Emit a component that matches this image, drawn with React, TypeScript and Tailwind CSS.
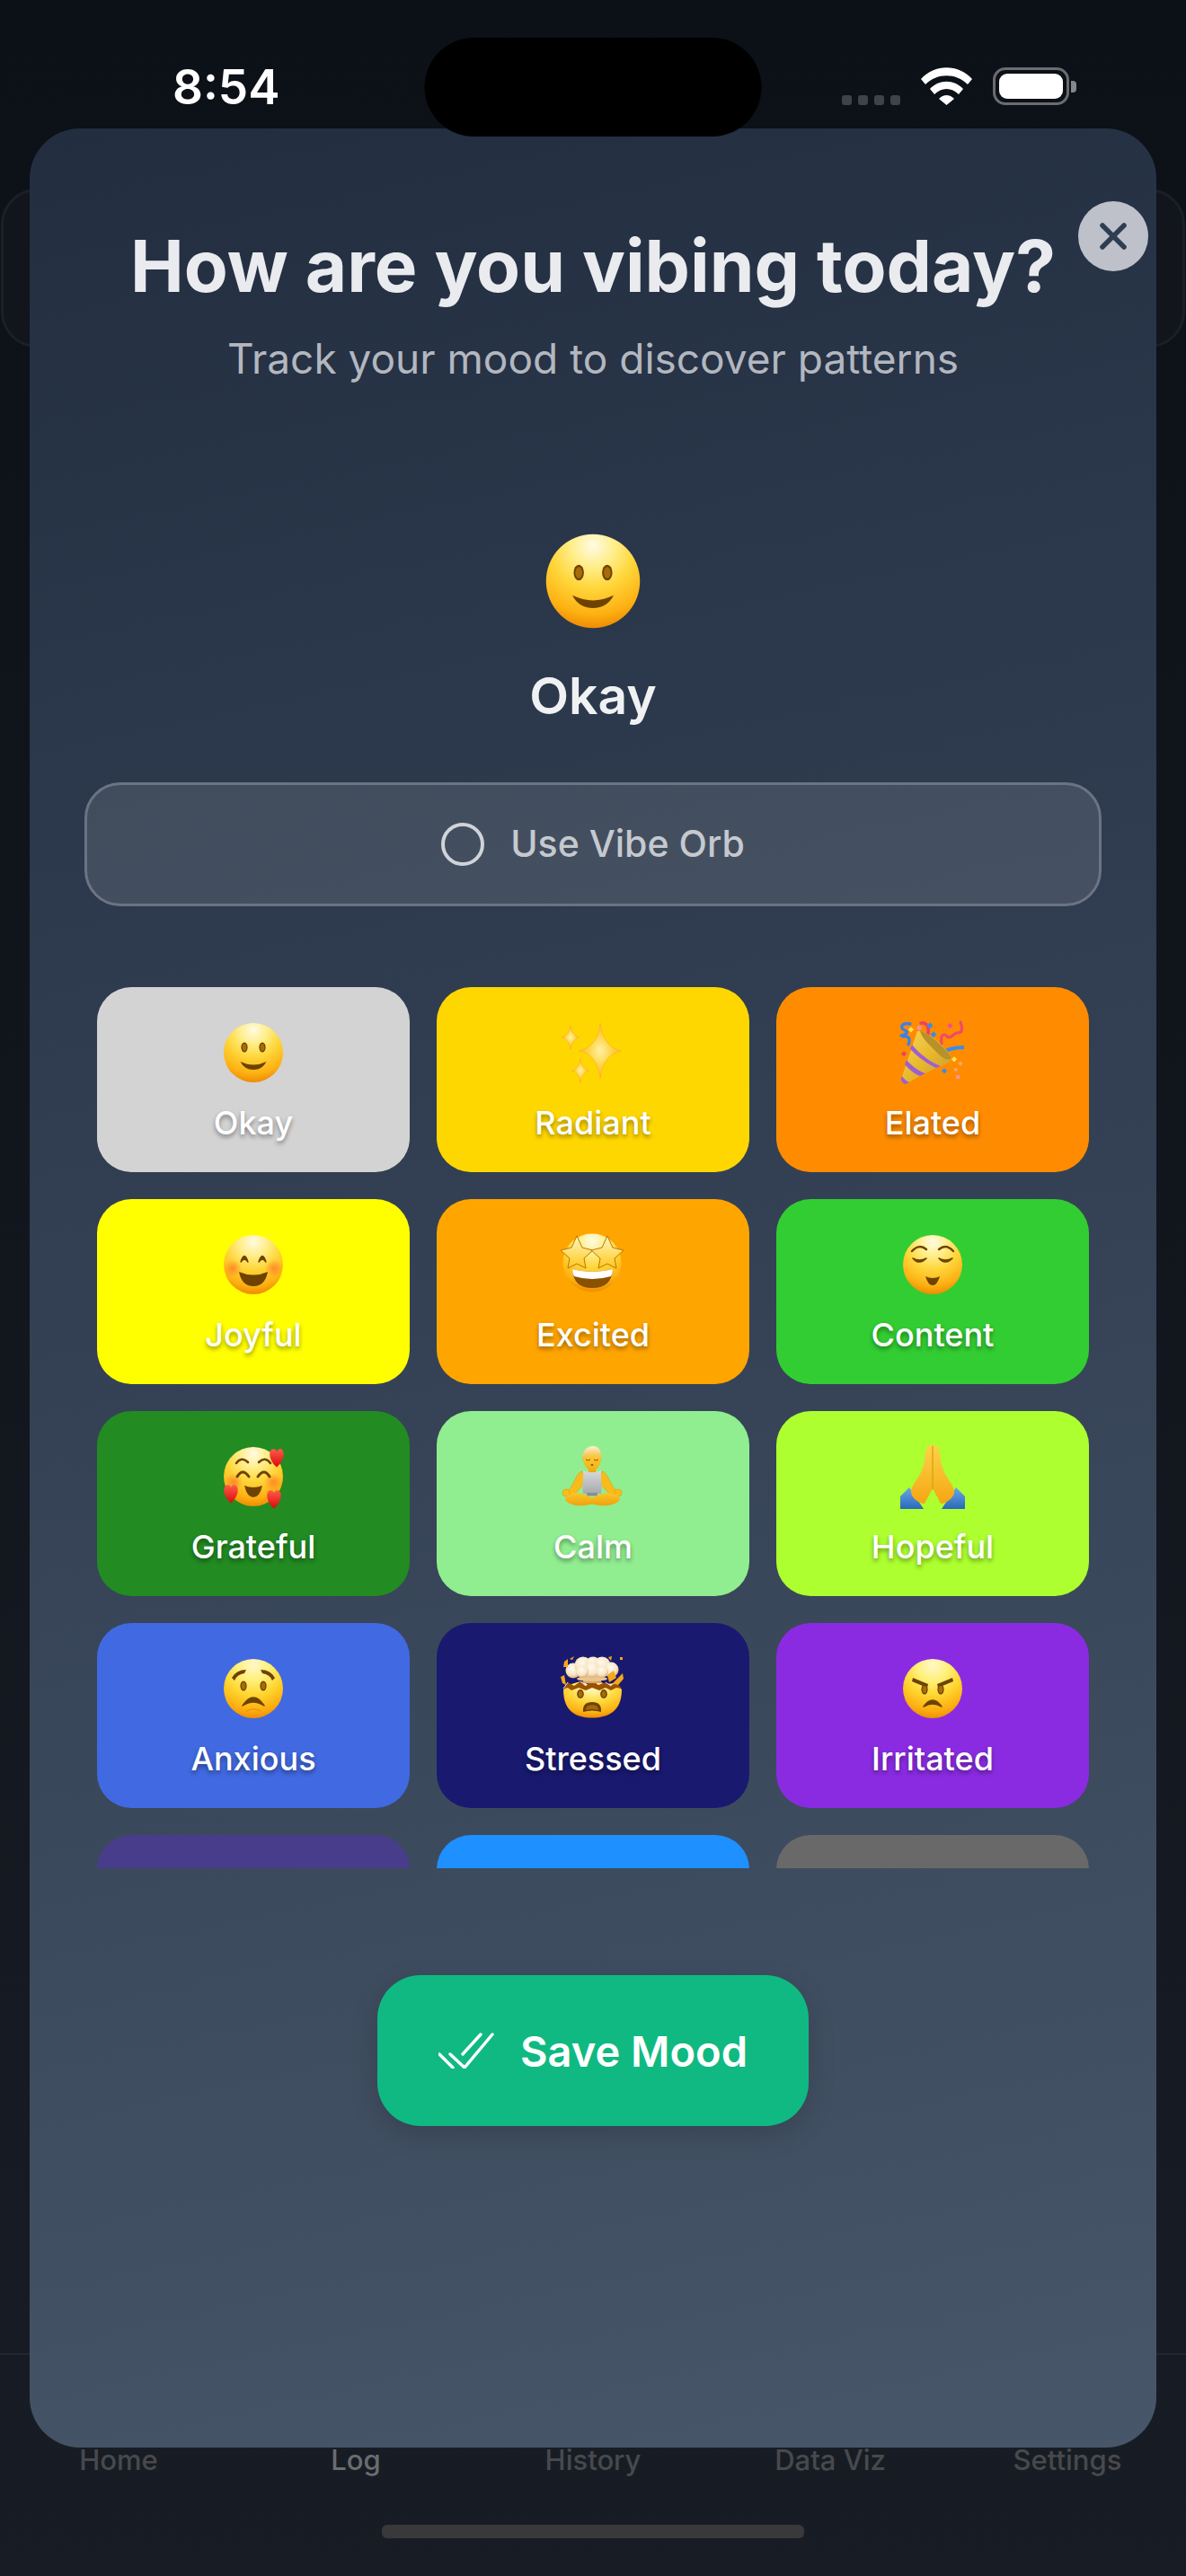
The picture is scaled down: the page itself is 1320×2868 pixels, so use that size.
import React from "react";

const Face = () => <circle cx="36" cy="36" r="33" fill="url(#face)" />;
const brown = "#6e4300";

const Eyes = ({ y = 28, dx = 10 }: { y?: number; dx?: number }) => (
  <g>
    <ellipse cx={36 - dx} cy={y} rx="3.6" ry="5.6" fill={brown} />
    <ellipse cx={36 + dx} cy={y} rx="3.6" ry="5.6" fill={brown} />
    <ellipse cx={36 - dx} cy={y} rx="2.4" ry="4" fill="#a66c0a" />
    <ellipse cx={36 + dx} cy={y} rx="2.4" ry="4" fill="#a66c0a" />
  </g>
);

const Okay = () => (
  <>
    <Face />
    <Eyes y={30} dx={10} />
    <path d="M21.5 46 Q36 53 50.5 46 Q46 55 36 55 Q26 55 21.5 46Z" fill={brown} />
  </>
);

const Star4 = ({ x, y, w, h }: { x: number; y: number; w: number; h: number }) => (
  <path
    d={`M${x} ${y - h / 2} Q${x + w * 0.06} ${y - h * 0.07} ${x + w / 2} ${y} Q${x + w * 0.06} ${y + h * 0.07} ${x} ${y + h / 2} Q${x - w * 0.06} ${y + h * 0.07} ${x - w / 2} ${y} Q${x - w * 0.06} ${y - h * 0.07} ${x} ${y - h / 2}Z`}
    fill="url(#spark)"
    stroke="#ffab33"
    strokeWidth="0.7"
  />
);
const Sparkles = () => (
  <>
    <Star4 x={44} y={34} w={47} h={62} />
    <Star4 x={11} y={19} w={20} h={27} />
    <Star4 x={22} y={56} w={19} h={27} />
  </>
);

const Popper = () => (
  <>
    <path d="M11 4 C1 2 -1 9 5 11 C11 13 4 17 1 17 M3 18 C8 17 12 19 9 27" fill="none" stroke="#3f7fe8" strokeWidth="3.4" strokeLinecap="round" />
    <path d="M23 3 C30 2 32 8 31 14 C30 20 31 23 30 29" fill="none" stroke="#f0405f" strokeWidth="3.6" strokeLinecap="round" />
    <path d="M46 26 C44 14 50 15 52 18 C56 22 60 13 64 14 C70 14 69 8 67 2" fill="none" stroke="#f04a6a" strokeWidth="3.2" strokeLinecap="round" />
    <path d="M42 38 C50 33 60 30 71 30" fill="none" stroke="#3f8ae8" strokeWidth="3.8" />
    <path d="M19 12 C30 10 56 34 57 42 C58 47 44 52 38 54 C30 58 18 64 8 70 C4 72 0 68 1 65Z" fill="url(#gold)" />
    <path d="M22 12 C30 12 52 32 57 42 C53 46 47 42 41 36 C33 28 24 20 22 12Z" fill="#b8912a" />
    <path d="M13 27 C20 36 32 46 45 51 L40 53 C29 48 18 39 11 32Z" fill="#9d5fd0" />
    <path d="M7 44 C12 50 20 57 28 59 L22 62 C16 60 9 54 5 49Z" fill="#9d5fd0" />
    <path d="M2 62 C4 65 7 68 10 69 L6 71 C3 71 0 67 1 64Z" fill="#9d5fd0" />
    <rect x="10" y="8" width="4.5" height="4.5" fill="#ffe14d" transform="rotate(45 12 10)" />
    <rect x="19" y="6" width="4.5" height="4.5" fill="#f58fb0" transform="rotate(45 21 8)" />
    <rect x="31" y="3" width="5" height="5" fill="#3f8ae8" transform="rotate(45 33 5)" />
    <rect x="35" y="13" width="5" height="5" fill="#3f8ae8" transform="rotate(45 37 15)" />
    <rect x="53" y="3.5" width="4.5" height="4.5" fill="#f0508a" transform="rotate(45 55 6)" />
    <rect x="2" y="35" width="4.5" height="4.5" fill="#e8445a" transform="rotate(45 4 37)" />
    <rect x="58" y="41" width="4.5" height="4.5" fill="#ffe14d" transform="rotate(45 60 43)" />
    <rect x="65" y="46" width="4" height="4" fill="#f4a95c" transform="rotate(45 67 48)" />
    <rect x="60" y="53" width="3.5" height="3.5" fill="#f4a95c" />
    <rect x="47" y="54" width="4.5" height="4.5" fill="#3f8ae8" transform="rotate(45 49 56)" />
    <rect x="62" y="61" width="4" height="4" fill="#f58fb0" />
  </>
);

const Joyful = () => (
  <>
    <Face />
    <circle cx="13" cy="40" r="10" fill="url(#blush)" />
    <circle cx="59" cy="40" r="10" fill="url(#blush)" />
    <path d="M22 33 Q26 20 30 33 Q26 27 22 33Z" fill={brown} stroke={brown} strokeWidth="1.4" strokeLinejoin="round" />
    <path d="M42 33 Q46 20 50 33 Q46 27 42 33Z" fill={brown} stroke={brown} strokeWidth="1.4" strokeLinejoin="round" />
    <path d="M20 44 Q36 51 52 44 Q49 60 36 60 Q23 60 20 44Z" fill={brown} />
  </>
);

const StarShape = ({ cx, cy }: { cx: number; cy: number }) => (
  <path
    d={`M${cx} ${cy - 21} L${cx + 6} ${cy - 8} L${cx + 18} ${cy - 5} L${cx + 8} ${cy + 4} L${cx + 10} ${cy + 15} L${cx} ${cy + 10} L${cx - 10} ${cy + 15} L${cx - 8} ${cy + 4} L${cx - 18} ${cy - 5} L${cx - 6} ${cy - 8}Z`}
    fill="url(#starfill)"
    stroke="#b97700"
    strokeWidth="1"
    strokeLinejoin="round"
  />
);
const Excited = () => (
  <>
    <circle cx="35" cy="34" r="32.5" fill="url(#face)" />
    <StarShape cx={18} cy={25} />
    <StarShape cx={52} cy={25} />
    <path d="M13 41 Q35 47 58 41 Q57 62 35 62 Q14 62 13 41Z" fill="#8a5200" />
    <path d="M13 41 Q35 47 58 41 Q58 46 56 49 Q35 55 15 49 Q13 46 13 41Z" fill="#fff" />
  </>
);

const Content = () => (
  <>
    <Face />
    <path d="M13 21 Q21 12 29 19" fill="none" stroke={brown} strokeWidth="2.4" strokeLinecap="round" />
    <path d="M43 19 Q51 12 59 21" fill="none" stroke={brown} strokeWidth="2.4" strokeLinecap="round" />
    <path d="M14 29 Q21 37 29 29 Q21 33 14 29Z" fill={brown} stroke={brown} strokeWidth="1.6" strokeLinejoin="round" />
    <path d="M43 29 Q50 37 58 29 Q50 33 43 29Z" fill={brown} stroke={brown} strokeWidth="1.6" strokeLinejoin="round" />
    <path d="M28 49 Q36 53 44 49 Q41 59 36 59 Q31 59 28 49Z" fill={brown} />
  </>
);

const Heart = ({ x, y }: { x: number; y: number }) => (
  <path
    transform={`translate(${x} ${y}) scale(1.05 0.88)`}
    d="M0 13 C-9 4 -9 -9 -4 -10 C-1.5 -10.5 0 -8 0 -6 C0 -8 1.5 -10.5 4 -10 C9 -9 9 4 0 13Z"
    fill="url(#heart)"
  />
);
const Grateful = () => (
  <>
    <Face />
    <circle cx="14" cy="42" r="10" fill="url(#blush)" />
    <circle cx="58" cy="42" r="10" fill="url(#blush)" />
    <path d="M17 21 Q23 13 30 20" fill="none" stroke={brown} strokeWidth="2.6" strokeLinecap="round" />
    <path d="M42 20 Q49 13 55 21" fill="none" stroke={brown} strokeWidth="2.6" strokeLinecap="round" />
    <path d="M18 36 Q24 26 31 36" fill="none" stroke={brown} strokeWidth="3" strokeLinecap="round" />
    <path d="M41 36 Q48 26 54 36" fill="none" stroke={brown} strokeWidth="3" strokeLinecap="round" />
    <path d="M26 46 Q36 50 46 46 Q43 59 36 59 Q29 59 26 46Z" fill={brown} />
    <Heart x={62} y={14} />
    <Heart x={11} y={54} />
    <Heart x={59} y={60} />
  </>
);

const Calm = () => (
  <>
    <path d="M24 30 C17 32 17 42 8 52 L5 55 L10 59 C20 52 25 46 28 38Z" fill="#f9bb1c" stroke="#e09a00" strokeWidth="0.6" />
    <path d="M46 30 C53 32 53 42 62 52 L65 55 L60 59 C50 52 45 46 42 38Z" fill="#f9bb1c" stroke="#e09a00" strokeWidth="0.6" />
    <circle cx="6" cy="54" r="4" fill="#fbbd1e" stroke="#e09a00" strokeWidth="0.6" />
    <circle cx="64" cy="54" r="4" fill="#fbbd1e" stroke="#e09a00" strokeWidth="0.6" />
    <rect x="31" y="24" width="8" height="8" fill="#f0a80f" />
    <path d="M25 29 C30 32 40 32 45 29 C45 38 46 48 45 55 L25 55 C24 48 25 38 25 29Z" fill="url(#tank)" />
    <rect x="29" y="54" width="12" height="3.5" fill="#8b8d92" />
    <path d="M5 62 C5 55 16 53 24 55 C30 57 36 60 41 64 C32 69 12 71 5 62Z" fill="url(#leg)" />
    <path d="M66 62 C66 55 54 53 46 55 C40 57 34 60 29 64 C38 69 58 71 66 62Z" fill="url(#leg)" />
    <ellipse cx="35" cy="18" rx="9.5" ry="11" fill="url(#skin)" />
    <path d="M25 20 C22 6 31 2 36 2 C45 2 46 12 45 20 C44 13 40 11 36 11 C31 11 26 13 25 20Z" fill="url(#hair)" />
    <path d="M28 17 Q30.5 19 33 17 M37 17 Q39.5 19 42 17" fill="none" stroke="#8a5200" strokeWidth="1" />
    <ellipse cx="35" cy="23" rx="1.4" ry="1" fill="#8a5200" />
  </>
);

const Hopeful = () => (
  <>
    <path d="M0 58 L10 48 L26 72 L0 72Z" fill="url(#sleeve)" />
    <path d="M72 58 L62 48 L46 72 L72 72Z" fill="url(#sleeve)" />
    <path d="M35.5 1 C29 0 28 8 27 18 C25 34 14 42 12 52 C11 58 20 66 27 66 L35.5 50Z" fill="url(#hand)" />
    <path d="M36.5 1 C43 0 44 8 45 18 C47 34 58 42 60 52 C61 58 52 66 45 66 L36.5 50Z" fill="url(#hand)" />
    <path d="M36 2 L36 50" stroke="#e88f00" strokeWidth="1.2" />
  </>
);

const Anxious = () => (
  <>
    <circle cx="36" cy="36" r="33" fill="url(#paleface)" />
    <path d="M12 24 Q17 15 28 15 L26 19 Q18 20 15 27Z" fill={brown} />
    <path d="M60 24 Q55 15 44 15 L46 19 Q54 20 57 27Z" fill={brown} />
    <Eyes y={33} dx={11} />
    <path d="M24 55 Q36 37 48 55 Q36 47 24 55Z" fill={brown} stroke={brown} strokeWidth="1.5" strokeLinejoin="round" />
    <path d="M28 61 Q36 57 44 61" fill="none" stroke="#e99a10" strokeWidth="1.6" strokeLinecap="round" />
  </>
);

const Stressed = () => (
  <>
    <path d="M3 37 C3 62 18 68.5 35 68.5 C52 68.5 68 62 68 37 L60 30 L50 31 L42 28 L30 31 L22 28 L12 31Z" fill="url(#face)" />
    <path d="M3 36 L8 29 L15 33 L22 28 L28 33 L35 27 L42 32 L50 29 L56 33 L62 29 L68 36 L62 35 L56 38 L50 35 L43 38 L35 35 L28 38 L20 35 L12 38 L8 35Z" fill="#9a5200" />
    <path d="M3 36 L8 29 M22 28 L28 33 M50 29 L56 33" stroke="#e8e8ee" strokeWidth="1" />
    <path d="M28 20 L42 20 L46 30 L24 30Z" fill="#d7a56a" />
    <ellipse cx="35" cy="25" rx="17" ry="3" fill="#e9c48f" />
    <circle cx="14" cy="16" r="8.5" fill="url(#cloud)" />
    <circle cx="25" cy="10" r="9.5" fill="url(#cloud)" />
    <circle cx="36" cy="9" r="8.5" fill="url(#cloud)" />
    <circle cx="46" cy="10" r="9.5" fill="url(#cloud)" />
    <circle cx="56" cy="15" r="8.5" fill="url(#cloud)" />
    <circle cx="35" cy="15" r="9" fill="url(#cloud)" />
    <circle cx="24" cy="17" r="7" fill="url(#cloud)" />
    <circle cx="46" cy="17" r="7" fill="url(#cloud)" />
    <path d="M4 6 L8 3 L8 12 L3 12Z" fill="#f7a71c" />
    <path d="M0 23 L4 21 L6 32 L2 30Z" fill="#f7a71c" />
    <path d="M10 3 L15 0 L13 4Z" fill="#f7a71c" />
    <path d="M52 21 L59 16 L62 24 L54 29Z" fill="#f7a71c" />
    <path d="M58 30 L69 19 L70 25 L64 32Z" fill="#f7a71c" />
    <path d="M53 1 L57 0 L56 5Z" fill="#f7a71c" />
    <rect x="66" y="1" width="3" height="3" fill="#f7a71c" />
    <ellipse cx="22" cy="42" rx="3.8" ry="5" fill="#6e4300" />
    <ellipse cx="48" cy="42" rx="3.8" ry="5" fill="#6e4300" />
    <ellipse cx="22" cy="42" rx="2.3" ry="3.5" fill="#a66c0a" />
    <ellipse cx="48" cy="42" rx="2.3" ry="3.5" fill="#a66c0a" />
    <path d="M25 62 Q24 51 35 51 Q46 51 45 62 Q35 59 25 62Z" fill={brown} />
    <path d="M28 60 Q28 54 35 54 Q42 54 42 60 Q35 58 28 60Z" fill="#9c6a10" />
  </>
);

const Irritated = () => (
  <>
    <circle cx="36" cy="36" r="33" fill="url(#paleface)" />
    <path d="M14 24 L31 31 L30 35 L13 28Z" fill={brown} />
    <path d="M58 24 L41 31 L42 35 L59 28Z" fill={brown} />
    <Eyes y={37} dx={9} />
    <path d="M26 56 Q36 42 46 56 Q36 50 26 56Z" fill={brown} stroke={brown} strokeWidth="1.5" strokeLinejoin="round" />
  </>
);

const Defs = () => (
  <svg width="0" height="0" className="absolute">
    <defs>
      <radialGradient id="face" cx="50%" cy="12%" r="92%">
        <stop offset="0" stopColor="#fffbe3" />
        <stop offset="0.25" stopColor="#ffee8a" />
        <stop offset="0.5" stopColor="#ffd63a" />
        <stop offset="0.8" stopColor="#fdb012" />
        <stop offset="1" stopColor="#e98200" />
      </radialGradient>
      <radialGradient id="paleface" cx="50%" cy="10%" r="95%">
        <stop offset="0" stopColor="#fff8c8" />
        <stop offset="0.28" stopColor="#fff07a" />
        <stop offset="0.55" stopColor="#ffd52e" />
        <stop offset="0.82" stopColor="#fcac10" />
        <stop offset="1" stopColor="#e98200" />
      </radialGradient>
      <radialGradient id="blush" cx="50%" cy="50%" r="50%">
        <stop offset="0" stopColor="#ff6a2a" stopOpacity="0.65" />
        <stop offset="1" stopColor="#ff6a2a" stopOpacity="0" />
      </radialGradient>
      <radialGradient id="spark" cx="50%" cy="50%" r="50%">
        <stop offset="0" stopColor="#fff0a6" />
        <stop offset="0.6" stopColor="#ffd23c" />
        <stop offset="1" stopColor="#ffb52e" />
      </radialGradient>
      <linearGradient id="gold" x1="0" y1="0" x2="1" y2="1">
        <stop offset="0" stopColor="#f6d65c" />
        <stop offset="0.5" stopColor="#e8b92e" />
        <stop offset="1" stopColor="#c8942a" />
      </linearGradient>
      <linearGradient id="starfill" x1="0" y1="0" x2="0" y2="1">
        <stop offset="0" stopColor="#fff6c0" />
        <stop offset="1" stopColor="#ffc81e" />
      </linearGradient>
      <linearGradient id="heart" x1="0" y1="0" x2="0" y2="1">
        <stop offset="0" stopColor="#ff5a4a" />
        <stop offset="1" stopColor="#d90a0a" />
      </linearGradient>
      <linearGradient id="tank" x1="0" y1="0" x2="0" y2="1">
        <stop offset="0" stopColor="#d8d9dc" />
        <stop offset="1" stopColor="#a7a9ad" />
      </linearGradient>
      <linearGradient id="leg" x1="0" y1="0" x2="0" y2="1">
        <stop offset="0" stopColor="#fbc52a" />
        <stop offset="1" stopColor="#f0a20c" />
      </linearGradient>
      <linearGradient id="skin" x1="0" y1="0" x2="0" y2="1">
        <stop offset="0" stopColor="#fcd44a" />
        <stop offset="1" stopColor="#f5ae10" />
      </linearGradient>
      <linearGradient id="hair" x1="0" y1="0" x2="0" y2="1">
        <stop offset="0" stopColor="#fff0c8" />
        <stop offset="1" stopColor="#f0a818" />
      </linearGradient>
      <linearGradient id="sleeve" x1="0" y1="0" x2="0" y2="1">
        <stop offset="0" stopColor="#6aa6e8" />
        <stop offset="1" stopColor="#2a69b8" />
      </linearGradient>
      <linearGradient id="hand" x1="0" y1="0" x2="0" y2="1">
        <stop offset="0" stopColor="#fdd24a" />
        <stop offset="1" stopColor="#f5a612" />
      </linearGradient>
      <radialGradient id="cloud" cx="45%" cy="35%" r="65%">
        <stop offset="0" stopColor="#fff9ee" />
        <stop offset="0.65" stopColor="#f8e6c6" />
        <stop offset="1" stopColor="#dcae72" />
      </radialGradient>
    </defs>
  </svg>
);

const Emoji = ({ size = 72, children }: { size?: number; children: React.ReactNode }) => (
  <svg width={size} height={size} viewBox="0 0 72 72" className="block overflow-visible">
    {children}
  </svg>
);

const moods: { label: string; bg: string; icon: React.ReactNode }[] = [
  { label: "Okay", bg: "bg-[#d3d3d3]", icon: <Okay /> },
  { label: "Radiant", bg: "bg-[#ffd700]", icon: <Sparkles /> },
  { label: "Elated", bg: "bg-[#ff8c00]", icon: <Popper /> },
  { label: "Joyful", bg: "bg-[#ffff00]", icon: <Joyful /> },
  { label: "Excited", bg: "bg-[#ffa500]", icon: <Excited /> },
  { label: "Content", bg: "bg-[#32cd32]", icon: <Content /> },
  { label: "Grateful", bg: "bg-[#228b22]", icon: <Grateful /> },
  { label: "Calm", bg: "bg-[#90ee90]", icon: <Calm /> },
  { label: "Hopeful", bg: "bg-[#adff2f]", icon: <Hopeful /> },
  { label: "Anxious", bg: "bg-[#4169e1]", icon: <Anxious /> },
  { label: "Stressed", bg: "bg-[#191970]", icon: <Stressed /> },
  { label: "Irritated", bg: "bg-[#8a2be2]", icon: <Irritated /> },
  { label: "", bg: "bg-[#483d8b]", icon: null },
  { label: "", bg: "bg-[#1e90ff]", icon: null },
  { label: "", bg: "bg-[#696969]", icon: null },
];

const tabs = ["Home", "Log", "History", "Data Viz", "Settings"];

export default function App() {
  return (
    <div className="relative flex h-[2868px] w-[1320px] flex-col overflow-hidden bg-gradient-to-b from-[#0c1017] to-[#181d25] font-['Inter',sans-serif]">
      <Defs />
      <div className="flex h-[210px] shrink-0 items-end justify-between pb-[93px] pl-[192px] pr-[122px]">
        <span className="relative top-[1px] text-[53px] font-semibold leading-[42px] text-white">8:54</span>
        <div className="flex items-end">
          <div className="flex gap-[7px]">
            {[0, 1, 2, 3].map((i) => (
              <span key={i} className="h-[11px] w-[11px] rounded-[3px] bg-[#3f4247]" />
            ))}
          </div>
          <svg width="57" height="42" viewBox="0 0 57 42" className="ml-[23px]">
            <path d="M0 13 C15 -4 42 -4 57 13 L52 19 C39 6 18 6 5 19Z M10 24 C20 13 37 13 47 24 L42 30 C34 22 23 22 15 30Z M20 35 C25 29.5 32 29.5 37 35 L28.5 42Z" fill="#fff" />
          </svg>
          <div className="ml-[23px] flex items-center">
            <div className="h-[42px] w-[85px] rounded-[14px] border-[3px] border-[#6a6c70] p-[4px]">
              <div className="h-full w-full rounded-[9px] bg-white" />
            </div>
            <div className="ml-[2px] h-[13px] w-[6px] rounded-r-[4px] bg-[#85878b]" />
          </div>
        </div>
      </div>

      <div className="mx-px h-[177px] shrink-0 rounded-[40px] border-[3px] border-[#1b1f26] bg-[#12161c]" />

      <div className="mt-auto h-[248px] shrink-0 border-t-[2px] border-[#22272f] pt-[97px]">
        <div className="grid grid-cols-5">
          {tabs.map((t, i) => (
            <span
              key={t}
              className={`text-center text-[31px] font-medium leading-[40px] ${i === 1 ? "text-[#6b6c70]" : "text-[#48494d]"}`}
            >
              {t}
            </span>
          ))}
        </div>
        <div className="mx-auto mt-[52px] h-[15px] w-[470px] rounded-[6px] bg-[#39393c]" />
      </div>

      <div className="absolute left-1/2 top-[42px] z-20 h-[110px] w-[375px] -translate-x-1/2 rounded-full bg-black" />

      <div className="absolute left-[33px] top-[143px] z-10 flex h-[2582px] w-[1254px] flex-col items-center rounded-[56px] bg-[linear-gradient(168deg,#222d40,#475669)]">
        <button className="absolute right-[9px] top-[81px] flex h-[78px] w-[78px] items-center justify-center rounded-full bg-[#bec1c9]">
          <svg width="30" height="30" viewBox="0 0 30 30">
            <path d="M3 3 L27 27 M27 3 L3 27" stroke="#2f3d52" strokeWidth="5.5" strokeLinecap="round" />
          </svg>
        </button>

        <h1 className="mt-[105px] text-[80px] font-bold leading-[96px] text-[#e9ebee]">How are you vibing today?</h1>
        <p className="mt-[27px] text-[46px] leading-[56px] text-[#b3b7bf]">Track your mood to discover patterns</p>

        <div className="mt-[163px]">
          <Emoji size={114}>
            <Okay />
          </Emoji>
        </div>
        <div className="mt-[36px] text-[57px] font-semibold leading-[70px] text-[#f0f1f3]">Okay</div>

        <button className="mt-[61px] flex h-[138px] w-[1132px] shrink-0 items-center justify-center gap-[29px] rounded-[40px] border-[3px] border-[#6b7484] bg-white/10">
          <span className="h-[48px] w-[48px] rounded-full border-[4px] border-[#d0d3d8]" />
          <span className="text-[41px] font-medium text-[#c5c9cf]">Use Vibe Orb</span>
        </button>

        <div className="mt-[90px] h-[981px] w-[1104px] shrink-0 overflow-hidden">
          <div className="grid grid-cols-3 gap-[30px]">
            {moods.map((m, i) => (
              <div
                key={i}
                className={`flex h-[206px] flex-col items-center rounded-[38px] pt-[37px] ${m.bg}`}
              >
                {m.icon && <Emoji>{m.icon}</Emoji>}
                <span className="mt-[20px] text-[36px] font-medium leading-[44px] text-white [text-shadow:0_3px_5px_rgba(0,0,0,0.4)]">
                  {m.label}
                </span>
              </div>
            ))}
          </div>
        </div>

        <button className="mt-[119px] flex h-[168px] w-[480px] shrink-0 items-center justify-center gap-[29px] rounded-[48px] bg-[#10b981] shadow-[0_10px_30px_rgba(0,0,0,0.15)]">
          <svg width="62" height="40" viewBox="0 0 62 40" fill="none" stroke="#fff" strokeWidth="3.4" strokeLinecap="round" strokeLinejoin="round">
            <path d="M13 24 L29 39 L60 2 M27 24 L47 2 M1 24 L16 39" />
          </svg>
          <span className="text-[47px] font-semibold leading-none text-white">Save Mood</span>
        </button>
      </div>
    </div>
  );
}
